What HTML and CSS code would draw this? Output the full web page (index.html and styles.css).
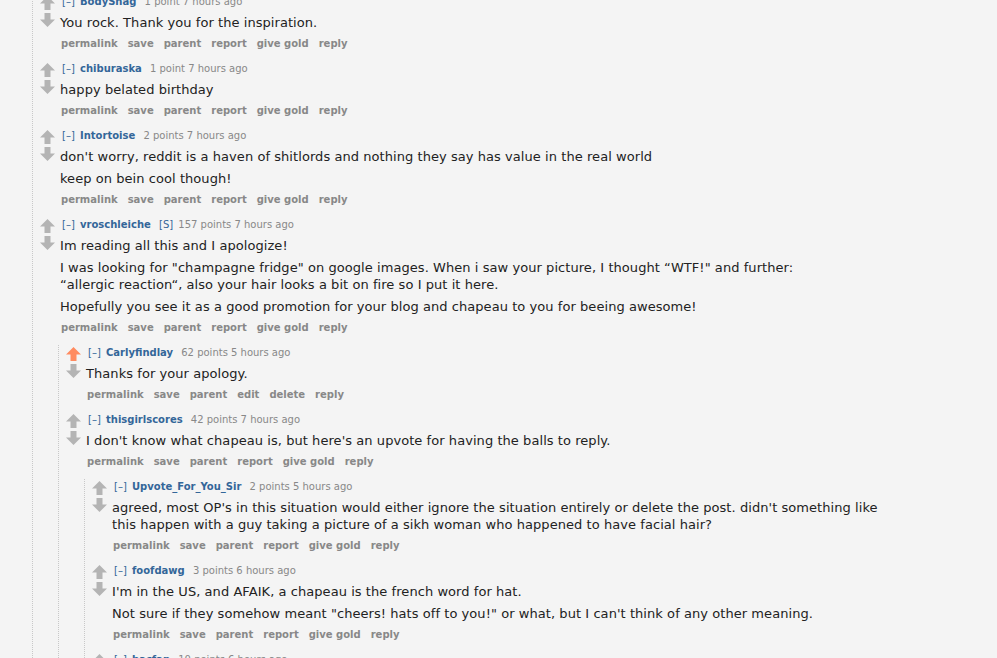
FILE: index.html
```html
<!DOCTYPE html>
<html>
<head>
<meta charset="utf-8">
<link rel="stylesheet" href="styles.css">
</head>
<body>
<svg width="0" height="0" class="defs">
  <defs>
    <symbol id="up" viewBox="0 0 15 14"><path d="M7.5 0 L15 7.5 L10.5 7.5 L10.5 14 L4.5 14 L4.5 7.5 L0 7.5 Z"/></symbol>
    <symbol id="down" viewBox="0 0 15 14"><path d="M7.5 14 L15 6.5 L10.5 6.5 L10.5 0 L4.5 0 L4.5 6.5 L0 6.5 Z"/></symbol>
  </defs>
</svg>
<div class="sitetable">

  <div class="comment">
    <div class="midcol"><svg class="arrow"><use href="#up"/></svg><svg class="arrow"><use href="#down"/></svg></div>
    <div class="entry">
      <p class="tagline"><a class="expand">[–]</a> <a class="author">BodySnag</a> <span class="score">1 point 7 hours ago</span></p>
      <div class="md"><p>You rock. Thank you for the inspiration.</p></div>
      <ul class="buttons"><li>permalink</li><li>save</li><li>parent</li><li>report</li><li>give gold</li><li>reply</li></ul>
    </div>
  </div>

  <div class="comment">
    <div class="midcol"><svg class="arrow"><use href="#up"/></svg><svg class="arrow"><use href="#down"/></svg></div>
    <div class="entry">
      <p class="tagline"><a class="expand">[–]</a> <a class="author">chiburaska</a> <span class="score">1 point 7 hours ago</span></p>
      <div class="md"><p>happy belated birthday</p></div>
      <ul class="buttons"><li>permalink</li><li>save</li><li>parent</li><li>report</li><li>give gold</li><li>reply</li></ul>
    </div>
  </div>

  <div class="comment">
    <div class="midcol"><svg class="arrow"><use href="#up"/></svg><svg class="arrow"><use href="#down"/></svg></div>
    <div class="entry">
      <p class="tagline"><a class="expand">[–]</a> <a class="author">Intortoise</a> <span class="score">2 points 7 hours ago</span></p>
      <div class="md"><p>don't worry, reddit is a haven of shitlords and nothing they say has value in the real world</p><p>keep on bein cool though!</p></div>
      <ul class="buttons"><li>permalink</li><li>save</li><li>parent</li><li>report</li><li>give gold</li><li>reply</li></ul>
    </div>
  </div>

  <div class="comment">
    <div class="midcol"><svg class="arrow"><use href="#up"/></svg><svg class="arrow"><use href="#down"/></svg></div>
    <div class="entry">
      <p class="tagline"><a class="expand">[–]</a> <a class="author">vroschleiche</a> <a class="submitter">[S]</a> <span class="score">157 points 7 hours ago</span></p>
      <div class="md"><p>Im reading all this and I apologize!</p><p>I was looking for "champagne fridge" on google images. When i saw your picture, I thought “WTF!" and further:<br>“allergic reaction“, also your hair looks a bit on fire so I put it here.</p><p>Hopefully you see it as a good promotion for your blog and chapeau to you for beeing awesome!</p></div>
      <ul class="buttons"><li>permalink</li><li>save</li><li>parent</li><li>report</li><li>give gold</li><li>reply</li></ul>
      <div class="child">

        <div class="comment">
          <div class="midcol"><svg class="arrow upmod"><use href="#up"/></svg><svg class="arrow"><use href="#down"/></svg></div>
          <div class="entry">
            <p class="tagline"><a class="expand">[–]</a> <a class="author">Carlyfindlay</a> <span class="score">62 points 5 hours ago</span></p>
            <div class="md"><p>Thanks for your apology.</p></div>
            <ul class="buttons"><li>permalink</li><li>save</li><li>parent</li><li>edit</li><li>delete</li><li>reply</li></ul>
          </div>
        </div>

        <div class="comment">
          <div class="midcol"><svg class="arrow"><use href="#up"/></svg><svg class="arrow"><use href="#down"/></svg></div>
          <div class="entry">
            <p class="tagline"><a class="expand">[–]</a> <a class="author">thisgirlscores</a> <span class="score">42 points 7 hours ago</span></p>
            <div class="md"><p>I don't know what chapeau is, but here's an upvote for having the balls to reply.</p></div>
            <ul class="buttons"><li>permalink</li><li>save</li><li>parent</li><li>report</li><li>give gold</li><li>reply</li></ul>
            <div class="child">

              <div class="comment">
                <div class="midcol"><svg class="arrow"><use href="#up"/></svg><svg class="arrow"><use href="#down"/></svg></div>
                <div class="entry">
                  <p class="tagline"><a class="expand">[–]</a> <a class="author">Upvote_For_You_Sir</a> <span class="score">2 points 5 hours ago</span></p>
                  <div class="md"><p>agreed, most OP's in this situation would either ignore the situation entirely or delete the post. didn't something like<br>this happen with a guy taking a picture of a sikh woman who happened to have facial hair?</p></div>
                  <ul class="buttons"><li>permalink</li><li>save</li><li>parent</li><li>report</li><li>give gold</li><li>reply</li></ul>
                </div>
              </div>

              <div class="comment">
                <div class="midcol"><svg class="arrow"><use href="#up"/></svg><svg class="arrow"><use href="#down"/></svg></div>
                <div class="entry">
                  <p class="tagline"><a class="expand">[–]</a> <a class="author">foofdawg</a> <span class="score">3 points 6 hours ago</span></p>
                  <div class="md"><p>I'm in the US, and AFAIK, a chapeau is the french word for hat.</p><p>Not sure if they somehow meant "cheers! hats off to you!" or what, but I can't think of any other meaning.</p></div>
                  <ul class="buttons"><li>permalink</li><li>save</li><li>parent</li><li>report</li><li>give gold</li><li>reply</li></ul>
                </div>
              </div>

              <div class="comment">
                <div class="midcol"><svg class="arrow"><use href="#up"/></svg><svg class="arrow"><use href="#down"/></svg></div>
                <div class="entry">
                  <p class="tagline"><a class="expand">[–]</a> <a class="author">bacfan</a> <span class="score">10 points 6 hours ago</span></p>
                  <div class="md"><p>&nbsp;</p></div>
                </div>
              </div>

            </div>
          </div>
        </div>

      </div>
    </div>
  </div>

</div>
</body>
</html>
```
FILE: styles.css
```css
html, body {
  margin: 0;
  padding: 0;
  background: #f4f4f4;
  overflow: hidden;
  height: 658px;
}
body {
  font-family: "DejaVu Sans", Verdana, sans-serif;
  color: #222;
}
.defs {
  position: absolute;
  width: 0;
  height: 0;
}
.sitetable {
  margin-left: 32px;
  margin-top: -6px;
  border-left: 1px dotted #c8c8c8;
  min-height: 700px;
}
.comment {
  display: grid;
  grid-template-columns: 20px 1fr;
  padding-left: 7px;
}
.midcol {
  display: flex;
  flex-direction: column;
  padding-top: 2px;
  gap: 3px;
}
.arrow {
  width: 15px;
  height: 14px;
  fill: #b4b4b4;
}
.arrow.upmod {
  fill: #ff8b60;
}
.entry {
  min-width: 0;
}
.tagline {
  margin: 0;
  padding-left: 2px;
  font-size: 10px;
  line-height: 15px;
  color: #888;
  white-space: nowrap;
  word-spacing: 2px;
}
.expand {
  color: #369;
}
.author {
  color: #369;
  font-weight: bold;
  margin-right: 3px;
}
.submitter {
  color: #369;
}
.score {
  word-spacing: 0;
}
.md p {
  margin: 5px 0;
  font-size: 13px;
  line-height: 17px;
  letter-spacing: 0.06px;
  white-space: nowrap;
}
.md {
  display: flow-root;
}
.buttons {
  list-style: none;
  margin: 0 0 10px;
  padding: 0 0 0 1px;
  display: flex;
  gap: 10px;
  font-size: 10px;
  line-height: 15px;
  font-weight: bold;
  color: #888;
}
.child {
  margin-left: -2px;
  border-left: 1px dotted #c8c8c8;
}
```
